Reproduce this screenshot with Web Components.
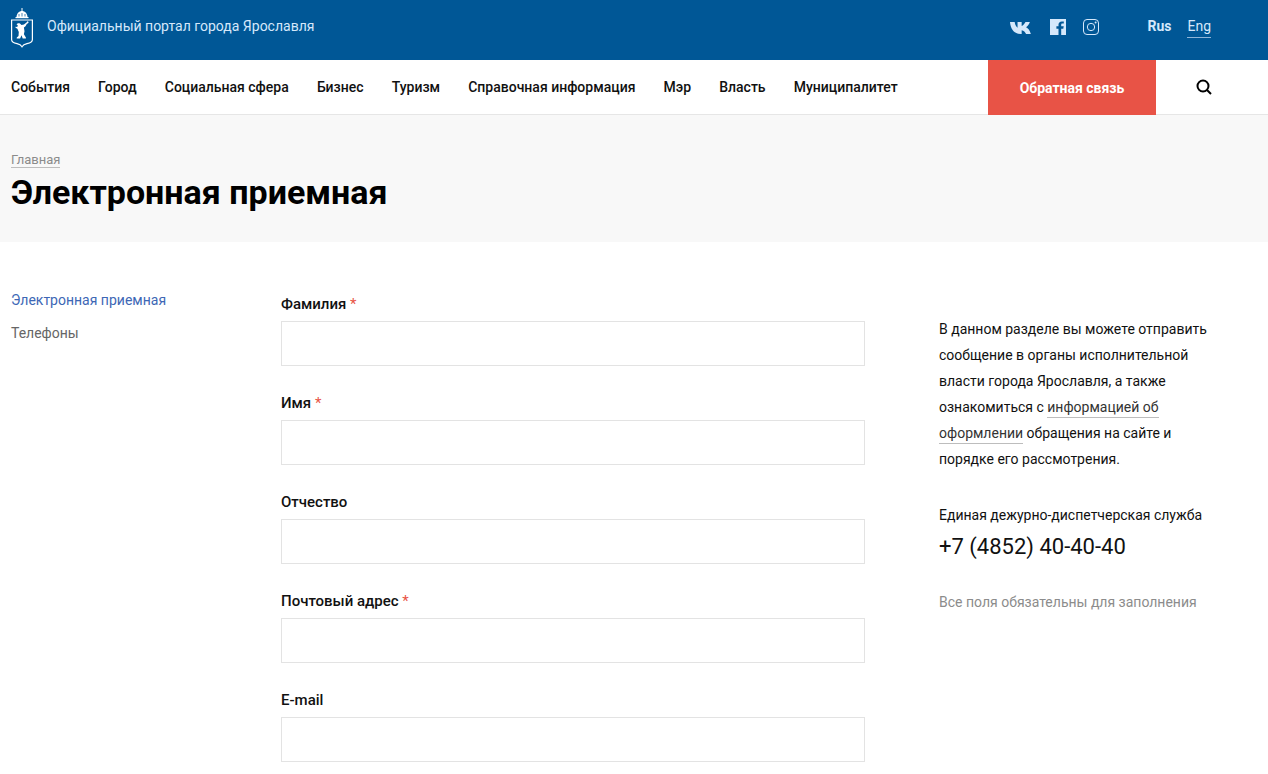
<!DOCTYPE html>
<html lang="ru">
<head>
<meta charset="utf-8">
<title>Электронная приемная</title>
<style>
  html, body { margin: 0; height: 774px; overflow: hidden; background: #fff; }
  body { font-family: Roboto, "Liberation Sans", sans-serif; color: #000; }
</style>
</head>
<body>
<top-bar></top-bar>
<main-nav></main-nav>
<page-title heading="Электронная приемная" crumb="Главная"></page-title>
<page-columns>
  <side-menu slot="left"></side-menu>
  <form-field label="Фамилия" required></form-field>
  <form-field label="Имя" required></form-field>
  <form-field label="Отчество"></form-field>
  <form-field label="Почтовый адрес" required></form-field>
  <form-field label="E-mail"></form-field>
  <info-aside slot="right"></info-aside>
</page-columns>

<script>
class TopBar extends HTMLElement {
  constructor() {
    super();
    this.attachShadow({mode: 'open'});
    this.shadowRoot.innerHTML = `
      <style>
        :host { display: flex; align-items: flex-start; height: 60px; background: #005796; color: #d5e8fb; box-sizing: border-box; padding-left: 11px; }
        .crest { width: 22px; height: 41px; margin-top: 7px; flex: none; }
        .name { margin: 18px 0 0 14px; font-size: 14px; line-height: 17px; flex: 1; }
        .social { display: flex; align-items: center; margin-top: 19px; height: 16px; }
        .social svg { display: block; }
        .vk { margin: 2px 19px 0 0; }
        .fb { margin-right: 17px; }
        .lang { display: flex; gap: 16px; margin: 18px 57px 0 48px; font-size: 14px; line-height: 17px; }
        .lang b { font-weight: 700; }
        .lang span { border-bottom: 1px solid #8fb5d8; height: 19px; }
      </style>
      <svg class="crest" viewBox="0 0 22 41" fill="none">
        <path d="M11 1v3" stroke="#fff" stroke-width="1"/>
        <path d="M5.500 10C5.800 6 8.400 4 11 4s5.200 2 5.500 6z" fill="#fff"/>
        <path d="M8 9.500V7M11 9.500V6M14 9.500V7" stroke="#005796" stroke-width=".7"/>
        <rect x="4.500" y="10" width="13" height="1.200" fill="#fff"/>
        <path d="M.6 13h20.800v19.500c0 2.800-2.300 3.600-5.400 4.200-2.200.4-4 1.300-5 3-1-1.700-2.800-2.600-5-3-3.100-.6-5.400-1.400-5.400-4.200z" stroke="#fff" stroke-width="1.200"/>
        <path d="M5.500 17.500c.8-1.200 2.500-1.600 3.700-.8l1.300 1.300 2.500-.5 2.800-2.300.4-1 1.600.8-1 1.600-.9.100-1.400 2.600-1.600 1.300.6 3.700-.6 3 2 3.100v1.100h-3.200l-1.200-3.200-1.400 3.200H5.700l.1-1.100 1.700-1.500.3-3.900-1.400-3.200-1.800-1-.2-1.100 1.700.4.800-1.400-.8-.9z" fill="#fff"/>
      </svg>
      <div class="name">Официальный портал города Ярославля</div>
      <div class="social">
        <svg class="vk" width="21" height="12" viewBox="0 0 15.300 10" preserveAspectRatio="none"><path fill="#d5e8fb" d="M0 0h3.400c.3 2.300 1.100 4 2.100 4.700V0h3v3.300c1-.4 2.100-1.700 2.800-3.300h3.200c-.5 1.900-1.600 3.400-2.800 4.300 1.500.9 2.700 2.400 3.500 5.700h-3.500c-.6-1.800-1.700-2.900-3.200-3.200V10H7.800C3.400 10 .4 6.300 0 0z"/></svg>
        <svg class="fb" width="16" height="16" viewBox="0 0 16 16"><path fill="#d5e8fb" d="M0 0h16v16h-4.800V9.800h2.100l.4-2.500h-2.500V5.800c0-.8.300-1.200 1.300-1.200h1.300V2.400h-1.900c-2.300 0-3.400 1.300-3.400 3.200v1.700H6.400v2.500h2.100V16H0z"/></svg>
        <svg width="16" height="16" viewBox="0 0 16 16" fill="none" stroke="#d5e8fb"><rect x=".5" y=".5" width="15" height="15" rx="3.500"/><circle cx="8" cy="8" r="3.700"/><circle cx="12.600" cy="3.400" r="1" fill="#d5e8fb" stroke="none"/></svg>
      </div>
      <div class="lang"><b>Rus</b><span>Eng</span></div>
    `;
  }
}

class MainNav extends HTMLElement {
  constructor() {
    super();
    this.attachShadow({mode: 'open'});
    const items = ['События', 'Город', 'Социальная сфера', 'Бизнес', 'Туризм', 'Справочная информация', 'Мэр', 'Власть', 'Муниципалитет'];
    this.shadowRoot.innerHTML = `
      <style>
        :host { display: flex; align-items: stretch; height: 55px; box-sizing: border-box; border-bottom: 1px solid #e6e6e6; padding-left: 11px; background: #fff; }
        nav { display: flex; align-items: center; gap: 28.15px; flex: 1; font-size: 14px; font-weight: 500; color: #111; }
        .feedback { width: 168px; height: 55px; background: #e85346; color: #fff; font-size: 14px; font-weight: 700; display: flex; align-items: center; justify-content: center; }
        .search { width: 112px; display: flex; align-items: center; }
        .search svg { margin-left: 40px; }
      </style>
      <nav>${items.map(i => `<span>${i}</span>`).join('')}</nav>
      <div class="feedback">Обратная связь</div>
      <div class="search">
        <svg width="16" height="16" viewBox="0 0 16 16" fill="none" stroke="#000" stroke-width="2"><circle cx="7" cy="7" r="5.500"/><path d="M11 11l4 4"/></svg>
      </div>
    `;
  }
}

class PageTitle extends HTMLElement {
  connectedCallback() {
    if(this.shadowRoot) return;
    this.attachShadow({mode: 'open'});
    this.shadowRoot.innerHTML = `
      <style>
        :host { display: block; height: 127px; box-sizing: border-box; background: #f8f8f8; padding: 34px 11px 0; }
        .crumb { display: inline-block; font-size: 13px; line-height: 14px; color: #8b8b8b; border-bottom: 1px solid #bdbdbd; }
        h1 { margin: 5px 0 0; font: 700 34px/38px Roboto, "Noto Sans", sans-serif; color: #000; }
      </style>
      <div><span class="crumb">${this.getAttribute('crumb')}</span></div>
      <h1>${this.getAttribute('heading')}</h1>
    `;
  }
}

class PageColumns extends HTMLElement {
  constructor() {
    super();
    this.attachShadow({mode: 'open'});
    this.shadowRoot.innerHTML = `
      <style>
        :host { display: grid; grid-template-columns: 270px 584px 1fr; padding: 50px 0 0 11px; }
        .form { display: flex; flex-direction: column; gap: 25px; }
        .right { padding: 0 0 0 74px; }
      </style>
      <div><slot name="left"></slot></div>
      <div class="form"><slot></slot></div>
      <div class="right"><slot name="right"></slot></div>
    `;
  }
}

class SideMenu extends HTMLElement {
  constructor() {
    super();
    this.attachShadow({mode: 'open'});
    this.shadowRoot.innerHTML = `
      <style>
        :host { display: flex; flex-direction: column; gap: 16px; font-size: 14px; line-height: 17px; color: #666; }
        .active { color: #3d67b5; }
      </style>
      <div class="active">Электронная приемная</div>
      <div>Телефоны</div>
    `;
  }
}

class FormField extends HTMLElement {
  connectedCallback() {
    if(this.shadowRoot) return;
    this.attachShadow({mode: 'open'});
    const star = this.hasAttribute('required') ? ' <i>*</i>' : '';
    this.shadowRoot.innerHTML = `
      <style>
        :host { display: block; }
        label { display: block; font-size: 15px; line-height: 17px; font-weight: 500; color: #111; margin: 4px 0 8px; }
        i { font-style: normal; font-weight: 400; color: #e85346; }
        input { display: block; width: 100%; height: 45px; box-sizing: border-box; border: 1px solid #e3e3e3; background: #fff; padding: 0 12px; outline: none; }
      </style>
      <label>${this.getAttribute('label')}${star}</label>
      <input type="text">
    `;
  }
}

class InfoAside extends HTMLElement {
  constructor() {
    super();
    this.attachShadow({mode: 'open'});
    this.shadowRoot.innerHTML = `
      <style>
        :host { display: block; font-size: 14px; color: #111; padding-top: 24px; }
        p { margin: 0; line-height: 26px; width: 270px; }
        a { color: #333; text-decoration: none; border-bottom: 1px solid #bdbdbd; padding-bottom: 2px; }
        .duty { margin-top: 35px; line-height: 17px; }
        .phone { font-size: 22px; line-height: 26px; margin-top: 10px; color: #111; }
        .note { margin-top: 34px; line-height: 17px; color: #8c8c8c; }
      </style>
      <p>В данном разделе вы можете отправить<br>сообщение в органы исполнительной<br>власти города Ярославля, а также<br>ознакомиться с <a>информацией об</a><br><a>оформлении</a> обращения на сайте и<br>порядке его рассмотрения.</p>
      <div class="duty">Единая дежурно-диспетчерская служба</div>
      <div class="phone">+7 (4852) 40-40-40</div>
      <div class="note">Все поля обязательны для заполнения</div>
    `;
  }
}

customElements.define('top-bar', TopBar);
customElements.define('main-nav', MainNav);
customElements.define('page-title', PageTitle);
customElements.define('page-columns', PageColumns);
customElements.define('side-menu', SideMenu);
customElements.define('form-field', FormField);
customElements.define('info-aside', InfoAside);
</script>
</body>
</html>
